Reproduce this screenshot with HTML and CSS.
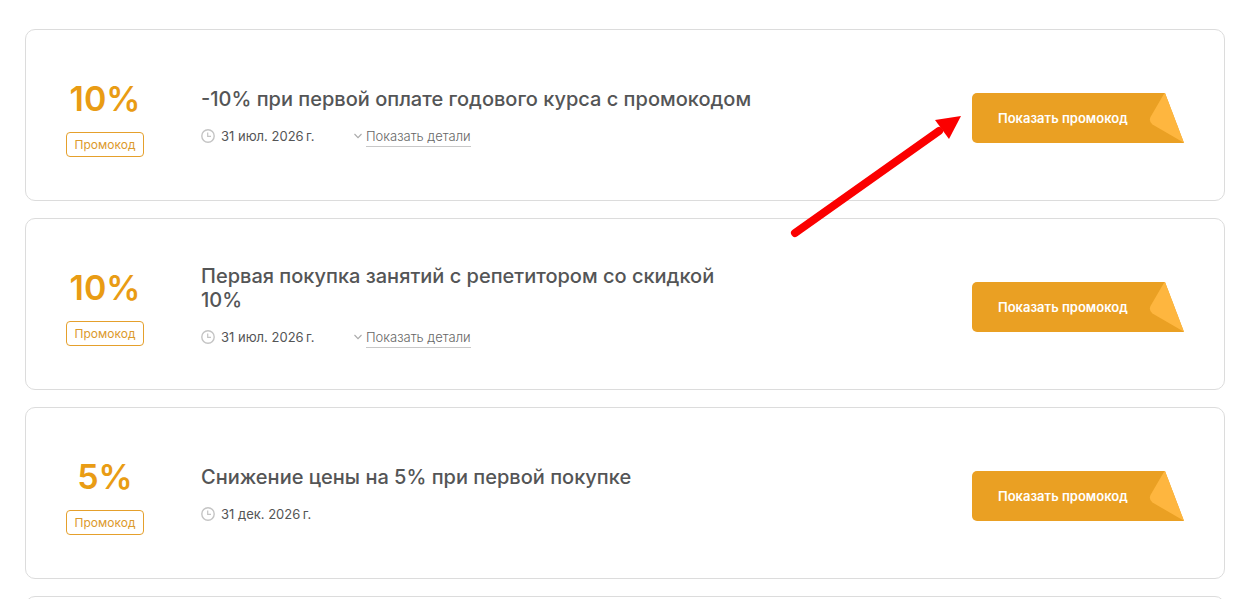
FILE: index.html
```html
<!DOCTYPE html>
<html lang="ru">
<head>
    <meta charset="UTF-8">
    <meta name="viewport" content="width=device-width, initial-scale=1.0">
    <title>Промокоды</title>
    <link rel="stylesheet" href="styles.css">
</head>
<body>
    <svg class="sprite" aria-hidden="true">
        <symbol id="clock" viewBox="0 0 14 14">
            <circle cx="7" cy="7" r="6.2" fill="none" stroke="currentColor" stroke-width="1.4"/>
            <path d="M6.7 3.5V7.4H10" fill="none" stroke="currentColor" stroke-width="1.2"/>
        </symbol>
        <symbol id="chevron" viewBox="0 0 8 6">
            <path d="M0.5 1L4 4.6L7.5 1" fill="none" stroke="currentColor" stroke-width="1.1"/>
        </symbol>
        <symbol id="fold" viewBox="0 0 35 50">
            <path d="M15.500 0L1.500 24Q-0.500 28.500 3.500 31.500L34.500 49.500L36 49L16.500 0Z" fill="#feb63f"/>
        </symbol>
    </svg>

    <main class="coupons">
        <article class="coupon">
            <div class="discount">
                <div class="discount-value">10%</div>
                <div class="discount-type">Промокод</div>
            </div>
            <div class="info">
                <h2>-10% при первой оплате годового курса с промокодом</h2>
                <div class="meta">
                    <span class="date"><svg class="clock"><use href="#clock"/></svg>31 июл. 2026&#8201;г.</span>
                    <a class="details" href="#"><svg class="chevron"><use href="#chevron"/></svg><span>Показать детали</span></a>
                </div>
            </div>
            <button type="button" class="show-code">Показать промокод<svg class="fold"><use href="#fold"/></svg></button>
        </article>

        <article class="coupon">
            <div class="discount">
                <div class="discount-value">10%</div>
                <div class="discount-type">Промокод</div>
            </div>
            <div class="info">
                <h2>Первая покупка занятий с репетитором со скидкой 10%</h2>
                <div class="meta">
                    <span class="date"><svg class="clock"><use href="#clock"/></svg>31 июл. 2026&#8201;г.</span>
                    <a class="details" href="#"><svg class="chevron"><use href="#chevron"/></svg><span>Показать детали</span></a>
                </div>
            </div>
            <button type="button" class="show-code">Показать промокод<svg class="fold"><use href="#fold"/></svg></button>
        </article>

        <article class="coupon">
            <div class="discount">
                <div class="discount-value">5%</div>
                <div class="discount-type">Промокод</div>
            </div>
            <div class="info">
                <h2>Снижение цены на 5% при первой покупке</h2>
                <div class="meta">
                    <span class="date"><svg class="clock"><use href="#clock"/></svg>31 дек. 2026&#8201;г.</span>
                </div>
            </div>
            <button type="button" class="show-code">Показать промокод<svg class="fold"><use href="#fold"/></svg></button>
        </article>

        <article class="coupon"></article>

        <!-- pointer to the first button -->
        <svg class="arrow" viewBox="0 0 172 126" aria-hidden="true">
            <path d="M6 120L150 18" stroke="#fb0000" stroke-width="8" stroke-linecap="round"/>
            <path d="M172 3L146 7L160 26Z" fill="#fb0000"/>
        </svg>
    </main>
</body>
</html>
```

FILE: styles.css
```css
* {
    box-sizing: border-box;
}

body {
    margin: 0;
    background-color: #fff;
    color: #545556;
    font-family: Inter, "Liberation Sans", sans-serif;
}

.sprite {
    position: absolute;
    width: 0;
    height: 0;
}

.coupons {
    position: relative;
    display: flex;
    flex-direction: column;
    gap: 17px;
    height: 100vh;
    padding: 29px 10px 0 25px;
    overflow: hidden;
}

.coupon {
    display: flex;
    flex: none;
    align-items: center;
    min-height: 172px;
    padding: 0 40px;
    border: 1px solid #dcdcdc;
    border-radius: 10px;
}

.discount {
    flex: none;
    width: 78px;
    margin-right: 57px;
    text-align: center;
}

.discount-value {
    color: #e99c14;
    font-size: 34px;
    font-weight: 600;
    line-height: 52px;
}

.discount-type {
    margin-top: 7px;
    border: 1px solid #e5a02c;
    border-radius: 4px;
    color: #dc9a2c;
    font-size: 12px;
    line-height: 23px;
}

.info {
    width: 554px;
    padding-top: 2px;
}

.info h2 {
    margin: 0 0 16px;
    font-size: 20px;
    font-weight: 500;
    line-height: 24px;
}

.meta {
    display: flex;
    align-items: center;
    height: 18px;
    font-size: 13px;
    line-height: 18px;
}

.date {
    display: flex;
    align-items: center;
    width: 153px;
}

.clock {
    width: 14px;
    height: 14px;
    margin-right: 6px;
    color: #c4c4c4;
}

.details {
    display: flex;
    align-items: center;
    color: #666;
    font-weight: 300;
    text-decoration: none;
}

.details span {
    border-bottom: 1px solid #c8c8c8;
    line-height: 20px;
}

.chevron {
    width: 8px;
    height: 6px;
    margin-right: 4px;
    color: #aaa;
}

.show-code {
    position: relative;
    flex: none;
    width: 212px;
    height: 50px;
    margin: 6px 0 0 auto;
    padding: 0 0 0 26px;
    border: none;
    border-radius: 5px 0 0 5px;
    background-color: #eaa023;
    clip-path: polygon(0 0, 193px 0, 100% 100%, 0 100%);
    color: #fff;
    font-family: inherit;
    font-size: 13px;
    font-weight: 600;
    text-align: left;
    cursor: pointer;
}

.fold {
    position: absolute;
    top: 0;
    right: 0;
    width: 35px;
    height: 50px;
}

.arrow {
    position: absolute;
    top: 113px;
    right: 274px;
    width: 172px;
    height: 126px;
}
```
